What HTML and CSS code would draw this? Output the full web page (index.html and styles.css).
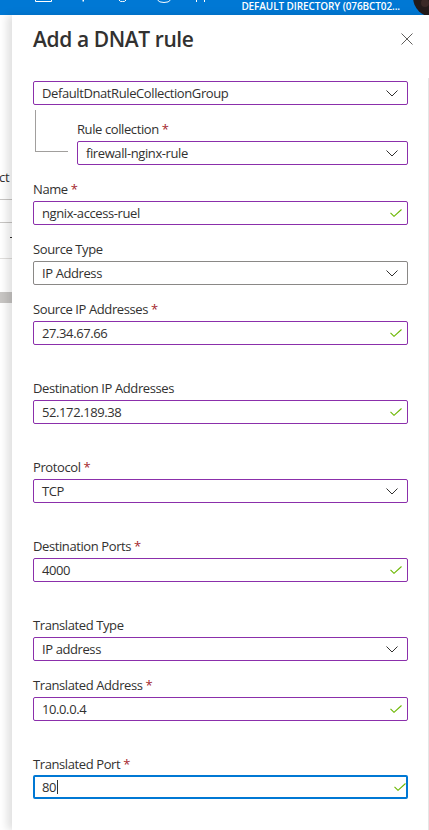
FILE: index.html
```html
<!DOCTYPE html>
<html lang="en">
<head>
<meta charset="utf-8">
<title>Add a DNAT rule</title>
<link rel="stylesheet" href="styles.css">
</head>
<body>
<div class="topbar">
  <svg class="ic ic1" width="17" height="3" viewBox="0 0 17 3"><path d="M0.5 0 V1.5 H16.5 V0" fill="none" stroke="#fff" stroke-width="1"/></svg>
  <svg class="ic ic2" width="3" height="3" viewBox="0 0 3 3"><rect x="0.5" y="0" width="1.5" height="1.5" fill="#fff"/></svg>
  <svg class="ic ic3" width="9" height="3" viewBox="0 0 9 3"><path d="M1 0 Q2 2 4.5 1.5 Q7 2 8 0" fill="none" stroke="#fff" stroke-width="1"/></svg>
  <svg class="ic ic4" width="14" height="3" viewBox="0 0 14 3"><path d="M0.5 0 Q2 2.5 7 2.5 Q12 2.5 13.5 0" fill="none" stroke="#fff" stroke-width="1"/></svg>
  <svg class="ic ic5" width="11" height="3" viewBox="0 0 11 3"><path d="M1.5 0 V2 M9.5 0 V2" fill="none" stroke="#fff" stroke-width="1"/></svg>
  <span class="dir">DEFAULT DIRECTORY (076BCT02...</span>
  <svg class="avatar" width="18" height="15" viewBox="0 0 18 15"><circle cx="22" cy="-3" r="20" fill="#231a1a"/><circle cx="14" cy="3" r="4" fill="#3a2826"/></svg>
</div>
<div class="main">
  <div class="behind">
    <span class="b-text">ct</span>
    <div class="b-line b-l1"></div>
    <div class="b-line b-l2"></div>
    <div class="b-dash"></div>
    <div class="b-line b-l3"></div>
    <div class="b-bar"></div>
  </div>
  <div class="panel">
    <div class="header">
      <h1>Add a DNAT rule</h1>
      <svg class="close" width="12" height="12" viewBox="0 0 12 12"><path d="M0.5 0.5 L11.5 11.5 M11.5 0.5 L0.5 11.5" stroke="#605e5c" stroke-width="1" fill="none"/></svg>
    </div>
    <div class="body">
      <div class="group">
        <div class="input purple">
          <span class="val">DefaultDnatRuleCollectionGroup</span>
          <svg class="chev" width="12" height="7" viewBox="0 0 12 7"><path d="M0.5 0.5 L6 6 L11.5 0.5" fill="none" stroke="#323130" stroke-width="1"/></svg>
        </div>
        <div class="nested">
          <div class="tree"><div class="tree-line"></div></div>
          <div class="field grow">
            <label class="lbl">Rule collection <span class="req">*</span></label>
            <div class="input purple">
              <span class="val">firewall-nginx-rule</span>
              <svg class="chev" width="12" height="7" viewBox="0 0 12 7"><path d="M0.5 0.5 L6 6 L11.5 0.5" fill="none" stroke="#323130" stroke-width="1"/></svg>
            </div>
          </div>
        </div>
      </div>

      <div class="field">
        <label class="lbl">Name <span class="req">*</span></label>
        <div class="input purple">
          <span class="val">ngnix-access-ruel</span>
          <svg class="check" width="12" height="8" viewBox="0 0 12 8"><path d="M0.5 3.8 L4 7.3 L11.5 0.5" fill="none" stroke="#6bb700" stroke-width="1.1"/></svg>
        </div>
      </div>

      <div class="field">
        <label class="lbl">Source Type</label>
        <div class="input gray">
          <span class="val">IP Address</span>
          <svg class="chev" width="12" height="7" viewBox="0 0 12 7"><path d="M0.5 0.5 L6 6 L11.5 0.5" fill="none" stroke="#323130" stroke-width="1"/></svg>
        </div>
      </div>

      <div class="field spaced">
        <label class="lbl">Source IP Addresses <span class="req">*</span></label>
        <div class="input purple">
          <span class="val">27.34.67.66</span>
          <svg class="check" width="12" height="8" viewBox="0 0 12 8"><path d="M0.5 3.8 L4 7.3 L11.5 0.5" fill="none" stroke="#6bb700" stroke-width="1.1"/></svg>
        </div>
      </div>

      <div class="field spaced">
        <label class="lbl">Destination IP Addresses</label>
        <div class="input purple">
          <span class="val">52.172.189.38</span>
          <svg class="check" width="12" height="8" viewBox="0 0 12 8"><path d="M0.5 3.8 L4 7.3 L11.5 0.5" fill="none" stroke="#6bb700" stroke-width="1.1"/></svg>
        </div>
      </div>

      <div class="field spaced">
        <label class="lbl">Protocol <span class="req">*</span></label>
        <div class="input purple">
          <span class="val">TCP</span>
          <svg class="chev" width="12" height="7" viewBox="0 0 12 7"><path d="M0.5 0.5 L6 6 L11.5 0.5" fill="none" stroke="#323130" stroke-width="1"/></svg>
        </div>
      </div>

      <div class="field spaced">
        <label class="lbl">Destination Ports <span class="req">*</span></label>
        <div class="input purple">
          <span class="val">4000</span>
          <svg class="check" width="12" height="8" viewBox="0 0 12 8"><path d="M0.5 3.8 L4 7.3 L11.5 0.5" fill="none" stroke="#6bb700" stroke-width="1.1"/></svg>
        </div>
      </div>

      <div class="field">
        <label class="lbl">Translated Type</label>
        <div class="input purple">
          <span class="val">IP address</span>
          <svg class="chev" width="12" height="7" viewBox="0 0 12 7"><path d="M0.5 0.5 L6 6 L11.5 0.5" fill="none" stroke="#323130" stroke-width="1"/></svg>
        </div>
      </div>

      <div class="field spaced">
        <label class="lbl">Translated Address <span class="req">*</span></label>
        <div class="input purple">
          <span class="val">10.0.0.4</span>
          <svg class="check" width="12" height="8" viewBox="0 0 12 8"><path d="M0.5 3.8 L4 7.3 L11.5 0.5" fill="none" stroke="#6bb700" stroke-width="1.1"/></svg>
        </div>
      </div>

      <div class="field">
        <label class="lbl">Translated Port <span class="req">*</span></label>
        <div class="input focus">
          <span class="val">80<span class="caret"></span></span>
          <svg class="check" width="12" height="8" viewBox="0 0 12 8"><path d="M0.5 3.8 L4 7.3 L11.5 0.5" fill="none" stroke="#6bb700" stroke-width="1.1"/></svg>
        </div>
      </div>
    </div>
  </div>
</div>
</body>
</html>
```

FILE: styles.css
```css
* { box-sizing: border-box; }

html, body {
  margin: 0;
  padding: 0;
  background: #ffffff;
  overflow: hidden;
}

body {
  width: 429px;
  height: 830px;
  font-family: "Open Sans", "Noto Sans", sans-serif;
  color: #323130;
}

/* top bar */
.topbar {
  height: 15px;
  background: #0078d4;
  display: flex;
  align-items: flex-start;
  padding-left: 35px;
  overflow: hidden;
}
.ic { display: block; flex: none; }
.ic2 { margin-left: 30px; }
.ic3 { margin-left: 33px; }
.ic4 { margin-left: 30px; }
.ic5 { margin-left: 24px; }
.dir {
  margin-left: auto;
  font-size: 10px;
  line-height: 12px;
  font-weight: 600;
  color: #ffffff;
  white-space: nowrap;
  letter-spacing: -0.1px;
}
.avatar { display: block; flex: none; margin-left: 11px; }

/* main */
.main {
  display: flex;
  height: 815px;
}

.behind {
  width: 12px;
  flex: none;
  overflow: hidden;
  display: flex;
  flex-direction: column;
  background: #ffffff;
}
.b-text {
  margin-top: 154px;
  font-size: 13px;
  line-height: 16px;
  white-space: nowrap;
  color: #323130;
  margin-left: -1px;
  letter-spacing: -0.3px;
}
.b-line {
  height: 1px;
  flex: none;
}
.b-l1 { margin-top: 14px; background: #c8c6c4; }
.b-l2 { margin-top: 22px; background: #c8c6c4; }
.b-dash { margin-top: 14px; margin-left: 10px; width: 3px; height: 1px; background: #323130; flex: none; }
.b-l3 { margin-top: 20px; background: #e1dfdd; }
.b-bar { margin-top: 33px; height: 11px; background: #c8c6c4; flex: none; }

.panel {
  flex: 1;
  min-width: 0;
  background: #ffffff;
  box-shadow: -5px 0 8px rgba(0, 0, 0, 0.12);
  position: relative;
  z-index: 1;
  display: flex;
  flex-direction: column;
  padding-left: 21px;
}

.header {
  height: 63px;
  display: flex;
  justify-content: space-between;
  align-items: flex-start;
  padding-top: 8px;
  padding-right: 16px;
}
.header h1 {
  margin: 0;
  font-size: 21px;
  line-height: 32px;
  font-weight: 600;
  color: #323130;
  letter-spacing: -0.4px;
}
.close { display: block; margin-top: 10px; }

.body {
  flex: 1;
  display: flex;
  flex-direction: column;
  gap: 14px;
  padding-top: 3px;
  padding-right: 20px;
  border-right: 1px solid #e5e5e5;
}

.group { display: flex; flex-direction: column; }
.nested { display: flex; padding-top: 14px; }
.tree { width: 44px; flex: none; }
.tree-line {
  margin-left: 2px;
  margin-top: -9px;
  width: 33px;
  height: 42px;
  border-left: 1px solid #a19f9d;
  border-bottom: 1px solid #a19f9d;
}
.grow { flex: 1; min-width: 0; }

.field { display: flex; flex-direction: column; }
.spaced { padding-bottom: 19px; }

.lbl {
  font-size: 13px;
  line-height: 20px;
  margin-bottom: 2px;
  color: #323130;
  letter-spacing: -0.4px;
  white-space: nowrap;
}
.req { color: #a4262c; }

.input {
  height: 24px;
  display: flex;
  align-items: center;
  justify-content: space-between;
  padding: 0 9px 0 8px;
  border: 1px solid #8a8886;
  border-radius: 2px;
  background: #ffffff;
}
.input.purple { border-color: #8b2fab; }
.input.gray { border-color: #8a8886; }
.input.focus { border: 2px solid #0078d4; padding: 0 4px 0 7px; margin-top: -1px; }
.input .check { margin-right: -4px; }

.val {
  font-size: 13px;
  line-height: 18px;
  color: #323130;
  letter-spacing: -0.4px;
  white-space: nowrap;
  display: flex;
  align-items: center;
}
.caret {
  display: inline-block;
  width: 1px;
  height: 14px;
  background: #323130;
  margin-left: 1px;
}
.chev, .check { display: block; flex: none; }
```
